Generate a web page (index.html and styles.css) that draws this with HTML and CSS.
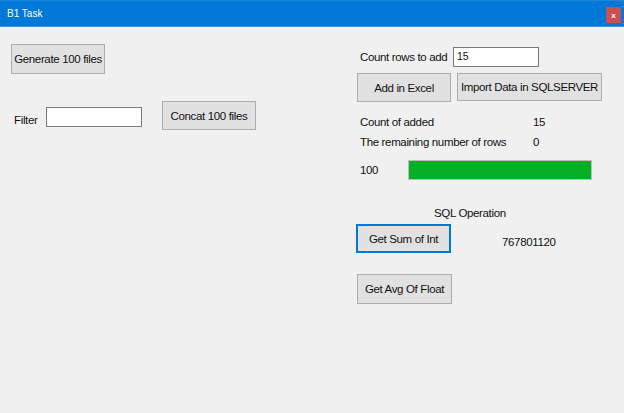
FILE: index.html
```html
<!DOCTYPE html>
<html>
<head>
<meta charset="utf-8">
<link rel="stylesheet" href="styles.css">
</head>
<body>
<div class="window">
  <div class="titlebar">
    <span class="title">B1 Task</span>
    <span class="close">x</span>
  </div>
  <div class="client">
    <div class="left">
      <button class="btn btn-gen">Generate 100 files</button>
      <div class="filter-row">
        <span class="lbl-filter">Filter</span>
        <span class="input input-filter"></span>
        <button class="btn btn-concat">Concat 100 files</button>
      </div>
    </div>
    <div class="right">
      <div class="row-count">
        <span class="lbl-count">Count rows to add</span>
        <span class="input input-count">15</span>
      </div>
      <div class="row-btns">
        <button class="btn btn-excel">Add in Excel</button>
        <button class="btn btn-import">Import Data in SQLSERVER</button>
      </div>
      <div class="stat stat-first">
        <span class="stat-lbl">Count of added</span><span>15</span>
      </div>
      <div class="stat stat-second">
        <span class="stat-lbl">The remaining number of rows</span><span>0</span>
      </div>
      <div class="row-progress">
        <span class="pct">100</span>
        <div class="progress"><div class="progress-fill" style="width:100%"></div></div>
      </div>
      <div class="sql-title">SQL Operation</div>
      <div class="row-sum">
        <button class="btn btn-sum">Get Sum of Int</button>
        <span class="sum-val">767801120</span>
      </div>
      <button class="btn btn-avg">Get Avg Of Float</button>
    </div>
  </div>
</div>
</body>
</html>
```

FILE: styles.css
```css
* { box-sizing: border-box; }
html, body {
  margin: 0;
  padding: 0;
  width: 624px;
  height: 413px;
  overflow: hidden;
  background: #f0f0f0;
}
.window {
  width: 624px;
  height: 413px;
  background: #f0f0f0;
  font-family: "Liberation Sans", Arial, sans-serif;
  font-size: 11.5px;
  letter-spacing: -0.35px;
  color: #111;
  white-space: nowrap;
}
.titlebar {
  height: 27px;
  background: #0078d7;
  border-top: 1px solid #1c86da;
  border-bottom: 1px solid #3c97e0;
  display: flex;
  align-items: center;
  justify-content: space-between;
  padding: 0 3px 0 7px;
  letter-spacing: 0;
}
.title {
  color: #fff;
  font-size: 10px;
  margin-top: -1px;
}
.close {
  width: 15px;
  height: 16px;
  background: #c75050;
  color: #fff;
  font-size: 8px;
  font-weight: bold;
  display: flex;
  align-items: center;
  justify-content: center;
  margin-top: 3px;
}
.client {
  display: flex;
}
.left {
  width: 356px;
  padding-left: 11px;
  display: flex;
  flex-direction: column;
  align-items: flex-start;
}
.btn {
  font-family: inherit;
  font-size: 11.5px;
  letter-spacing: -0.35px;
  white-space: nowrap;
  color: #111;
  background: #e1e1e1;
  border: 1px solid #adadad;
  padding: 0;
  margin: 0;
  display: flex;
  align-items: center;
  justify-content: center;
  line-height: 14px;
}
.btn-gen { width: 94px; height: 30px; margin-top: 17px; }
.filter-row {
  display: flex;
  align-items: flex-start;
  margin-top: 27px;
}
.lbl-filter {
  margin-left: 3px;
  width: 32px;
  margin-top: 12px;
  line-height: 14px;
}
.input {
  display: block;
  background: #fff;
  border: 1px solid #7a7a7a;
  line-height: 16px;
  padding-left: 3px;
  font-size: 10.5px;
  letter-spacing: 0;
}
.input-filter { width: 96px; height: 20px; margin-top: 6px; }
.btn-concat { width: 94px; height: 29px; margin-left: 20px; }

.right {
  flex: 1;
  display: flex;
  flex-direction: column;
  align-items: flex-start;
}
.row-count {
  display: flex;
  align-items: center;
  margin-top: 20px;
  height: 20px;
}
.lbl-count { margin-left: 4px; width: 93px; line-height: 14px; }
.input-count { width: 86px; height: 20px; }
.row-btns {
  display: flex;
  align-items: flex-start;
  margin-top: 6px;
}
.btn-excel { width: 94px; height: 29px; margin-left: 1px; }
.btn-import { width: 145px; height: 28px; margin-left: 6px; }
.stat {
  display: flex;
  line-height: 14px;
  margin-left: 4px;
}
.stat-first { margin-top: 13px; }
.stat-second { margin-top: 6px; }
.stat-lbl { width: 173px; }
.row-progress {
  display: flex;
  align-items: center;
  margin-top: 11px;
  height: 20px;
}
.pct { margin-left: 4px; width: 48px; line-height: 14px; }
.progress {
  width: 184px;
  height: 20px;
  border: 1px solid #bcbcbc;
  background: #e6e6e6;
}
.progress-fill {
  height: 100%;
  background: #06b025;
}
.sql-title {
  margin-top: 26px;
  margin-left: 78px;
  line-height: 14px;
}
.row-sum {
  display: flex;
  align-items: flex-start;
  margin-top: 4px;
}
.btn-sum {
  width: 95px;
  height: 29px;
  background: #e1e1e1;
  border: 2px solid #0078d7;
}
.sum-val {
  margin-left: 51px;
  margin-top: 11px;
  line-height: 14px;
}
.btn-avg { width: 95px; height: 30px; margin-left: 1px; margin-top: 21px; }
```
